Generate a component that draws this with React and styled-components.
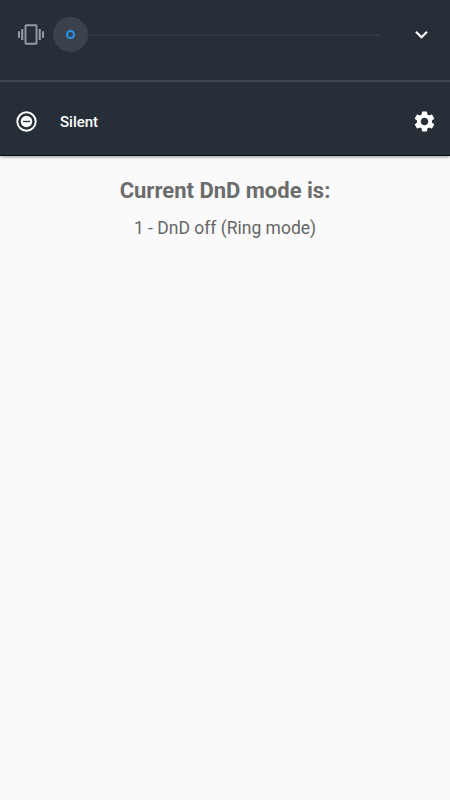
import styled, { createGlobalStyle } from "styled-components";
import { MdExpandMore, MdSettings } from "react-icons/md";

const App = () => {
  return (
    <>
      <GlobalStyle />
      <Screen>
        <VolumePanel>
          <SliderRow>
            <VibrateIcon />
            <Slider>
              <Thumb>
                <Dot />
              </Thumb>
              <Track />
            </Slider>
            <IconButton aria-label="Expand">
              <MdExpandMore size={25} />
            </IconButton>
          </SliderRow>
          <ModeRow>
            <SilentIcon />
            <ModeLabel>Silent</ModeLabel>
            <IconButton aria-label="Settings">
              <MdSettings size={25} />
            </IconButton>
          </ModeRow>
        </VolumePanel>
        <Content>
          <Title>Current DnD mode is:</Title>
          <Status>1 - DnD off (Ring mode)</Status>
        </Content>
      </Screen>
    </>
  );
};

const VibrateIcon = () => (
  <svg width="26" height="21" viewBox="0 0 26 21" fill="#939ba3">
    <path d="M0 7.2h2v6.6H0zM3.2 5.1h2.1v10.8H3.2zM20.7 5.1h2.1v10.8h-2.1zM24 7.2h2v6.6h-2z" />
    <rect
      x="7.5"
      y="1.3"
      width="11"
      height="18.4"
      rx="0.5"
      fill="none"
      stroke="#939ba3"
      strokeWidth="1.9"
    />
  </svg>
);

const SilentIcon = () => (
  <svg width="21" height="21" viewBox="0 0 21 21" fill="none">
    <circle cx="10.5" cy="10.5" r="9.2" stroke="#fff" strokeWidth="1.9" />
    <circle cx="10.5" cy="10.5" r="5.7" fill="#fff" />
    <path d="M7 10.5h7" stroke="#262e38" strokeWidth="1.3" />
  </svg>
);

const GlobalStyle = createGlobalStyle`
  body {
    margin: 0;
    background: #fafafa;
    font-family: Roboto, sans-serif;
  }
`;

const Screen = styled.div`
  width: 450px;
  height: 800px;
  overflow: hidden;
  background: #fafafa;
`;

const VolumePanel = styled.div`
  box-sizing: border-box;
  height: 156px;
  background: #262e38;
  border-bottom: 1px solid #090e15;
  box-shadow: 0 1px 3px rgba(0, 0, 0, 0.4);
`;

const SliderRow = styled.div`
  box-sizing: border-box;
  display: flex;
  align-items: center;
  height: 82px;
  padding: 0 16px 11px 18px;
  border-bottom: 2px solid #3e464f;
`;

const Slider = styled.div`
  display: flex;
  align-items: center;
  width: 327px;
  margin-left: 9px;
`;

const Thumb = styled.div`
  display: flex;
  align-items: center;
  justify-content: center;
  flex: none;
  width: 35px;
  height: 35px;
  border-radius: 50%;
  background: #3c424c;
`;

const Dot = styled.div`
  box-sizing: border-box;
  width: 9px;
  height: 9px;
  border: 2px solid #2196f3;
  border-radius: 50%;
`;

const Track = styled.div`
  flex: 1;
  height: 2px;
  background: #303841;
`;

const IconButton = styled.button`
  display: flex;
  margin-left: auto;
  padding: 0;
  border: none;
  background: none;
  color: #fff;
`;

const ModeRow = styled.div`
  display: flex;
  align-items: center;
  height: 73px;
  padding: 5px 13px 0 16px;
  box-sizing: border-box;
`;

const ModeLabel = styled.span`
  margin-left: 23px;
  padding-top: 1px;
  color: #fff;
  font-size: 15px;
  font-weight: 500;
  line-height: 20px;
`;

const Content = styled.div`
  padding-top: 20px;
  text-align: center;
`;

const Title = styled.h1`
  margin: 0;
  color: #6c6c6c;
  font-size: 22px;
  font-weight: 700;
  line-height: 30px;
`;

const Status = styled.p`
  margin: 10px 0 0;
  color: #666;
  font-size: 17.5px;
  line-height: 24px;
`;

export default App;
